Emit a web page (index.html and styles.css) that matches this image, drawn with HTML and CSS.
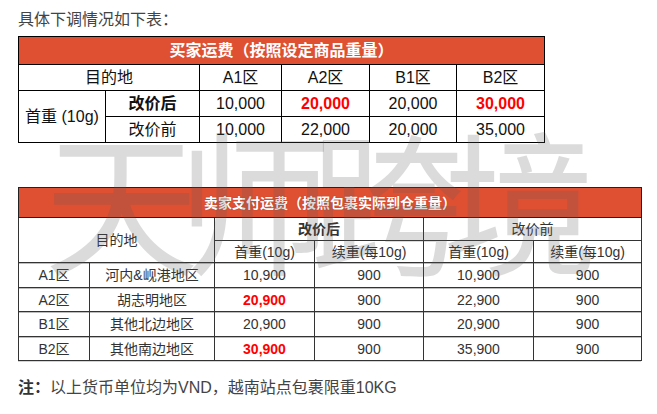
FILE: index.html
```html
<!DOCTYPE html>
<html lang="zh">
<head>
<meta charset="utf-8">
<link rel="stylesheet" href="styles.css">
</head>
<body>
<div class="page">
  <p class="intro">具体下调情况如下表：</p>
  <table class="t1">
    <colgroup>
      <col class="c87"><col class="c94"><col class="c82"><col class="c88"><col class="c87"><col class="c88">
    </colgroup>
    <tr class="hd"><td colspan="6">买家运费（按照设定商品重量）</td></tr>
    <tr><td colspan="2">目的地</td><td>A1区</td><td>A2区</td><td>B1区</td><td>B2区</td></tr>
    <tr><td rowspan="2">首重 (10g)</td><td class="b">改价后</td><td>10,000</td><td class="red">20,000</td><td>20,000</td><td class="red">30,000</td></tr>
    <tr><td>改价前</td><td>10,000</td><td>22,000</td><td>20,000</td><td>35,000</td></tr>
  </table>

  <table class="t2">
    <colgroup>
      <col class="d71"><col class="d125"><col class="d100"><col class="d109"><col class="d110"><col class="d108">
    </colgroup>
    <tr class="hd"><td colspan="6">卖家支付运费（按照包裹实际到仓重量）</td></tr>
    <tr class="r23"><td colspan="2" rowspan="2">目的地</td><td colspan="2" class="b">改价后</td><td colspan="2">改价前</td></tr>
    <tr class="r22"><td>首重(10g)</td><td>续重(每10g)</td><td>首重(10g)</td><td>续重(每10g)</td></tr>
    <tr class="r25 ln"><td>A1区</td><td>河内&amp;岘港地区</td><td>10,900</td><td>900</td><td>10,900</td><td>900</td></tr>
    <tr class="r24 ln"><td>A2区</td><td>胡志明地区</td><td class="red">20,900</td><td>900</td><td>22,900</td><td>900</td></tr>
    <tr class="r25 ln"><td>B1区</td><td>其他北边地区</td><td>20,900</td><td>900</td><td>20,900</td><td>900</td></tr>
    <tr class="r24 ln"><td>B2区</td><td>其他南边地区</td><td class="red">30,900</td><td>900</td><td>35,900</td><td>900</td></tr>
  </table>
  <div class="underline"></div>

  <p class="note"><b>注：</b>以上货币单位均为VND，越南站点包裹限重10KG</p>

  <div class="watermark">天师跨境</div>
</div>
</body>
</html>
```
FILE: styles.css
```css
html, body {
  margin: 0;
  padding: 0;
  background: #fff;
}
body {
  font-family: "Liberation Sans", "Noto Sans CJK SC", sans-serif;
  color: #333;
}
.page {
  position: relative;
  padding: 8px 0 0 18px;
  width: 639px;
  height: 406px;
  overflow: hidden;
}
.intro {
  margin: 0;
  font-size: 16px;
  line-height: 24px;
  color: #444;
}
table {
  border-collapse: collapse;
  table-layout: fixed;
  text-align: center;
}
.t1 {
  margin-top: 4px;
  width: 527px;
  font-size: 16px;
  color: #111;
}
.t1 td {
  border: 1px solid #000;
  height: 25px;
  padding: 0;
  line-height: 18px;
}
.t1 .hd td {
  height: 27px;
  background: #df5032;
  color: #fff;
  font-weight: bold;
  font-size: 16px;
}
.c87 { width: 87px; }
.c94 { width: 94px; }
.c82 { width: 82px; }
.c88 { width: 88px; }

.t2 {
  margin-top: 44px;
  width: 623px;
  font-size: 14px;
  color: #333;
}
.t2 td {
  border: 1px solid #333;
  padding: 0;
  line-height: 18px;
}
.t2 .hd td {
  height: 29px;
  background: #df5032;
  color: #fff;
  font-weight: bold;
  font-size: 14px;
  border-color: #222;
  text-shadow: 0 0 1px rgba(120,30,10,0.6);
}
.t2 .r23 td { height: 22px; }
.t2 .r22 td { height: 21px; }
.t2 .r25 td { height: 24px; }
.t2 .r24 td { height: 23px; }
.t2 .ln td {
  background: linear-gradient(#bdbdbd, #bdbdbd) top left / 100% 1px no-repeat;
}
.d71 { width: 71px; }
.d125 { width: 125px; }
.d100 { width: 100px; }
.d109 { width: 109px; }
.d110 { width: 110px; }
.d108 { width: 108px; }

.underline {
  width: 623px;
  height: 1px;
  background: #d4d4d4;
}

.b { font-weight: bold; }
.red { color: #f00; font-weight: bold; }

.note {
  margin: 15px 0 0 0;
  font-size: 16px;
  line-height: 22px;
  color: #444;
}
.note b { color: #333; }

.watermark {
  position: absolute;
  left: 44px;
  top: 118px;
  font-family: "Noto Sans CJK SC", sans-serif;
  font-size: 155px;
  line-height: 1;
  letter-spacing: -22px;
  color: rgba(90, 90, 90, 0.22);
  white-space: nowrap;
  pointer-events: none;
}
```
